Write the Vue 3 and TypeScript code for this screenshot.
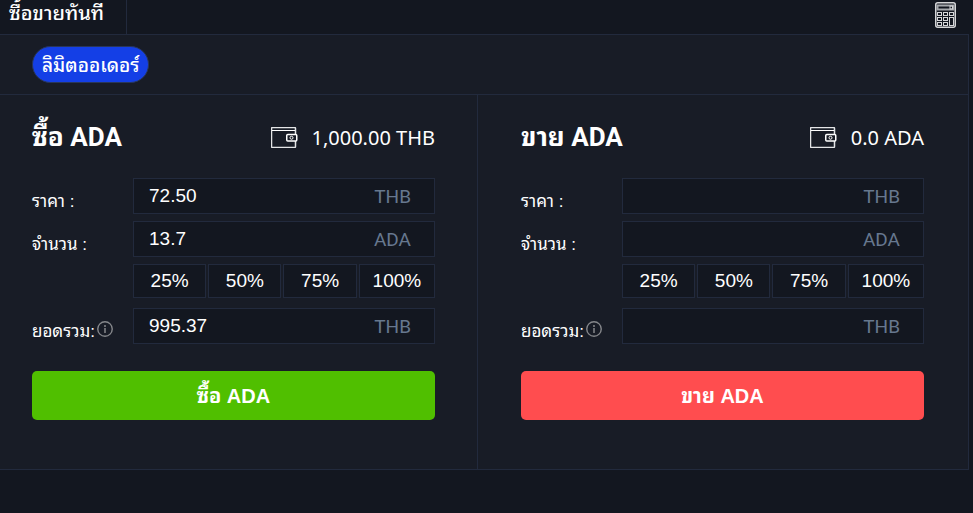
<script setup lang="ts">
import { reactive } from 'vue'

interface Side {
  id: string
  action: string
  balance: string
  price: string
  amount: string
  total: string
}

const sides = reactive<Side[]>([
  { id: 'buy', action: 'ซื้อ ADA', balance: '1,000.00 THB', price: '72.50', amount: '13.7', total: '995.37' },
  { id: 'sell', action: 'ขาย ADA', balance: '0.0 ADA', price: '', amount: '', total: '' },
])

const shares = [25, 50, 75, 100]

function useShare(side: Side, share: number) {
  const price = Number(side.price)
  const balance = parseFloat(side.balance.replace(/,/g, ''))
  if (!price) return
  const amount = side.id === 'buy' ? (balance * share) / 100 / price : (balance * share) / 100
  side.amount = amount.toFixed(2)
  side.total = (amount * price).toFixed(2)
}
</script>

<template>
  <main class="trade">
    <header class="topbar">
      <a class="tab" href="#instant">ซื้อขายทันที</a>
      <button class="calculator" type="button">
        <svg width="21" height="26" viewBox="0 0 21 26" fill="none" stroke="#d5d6d8">
          <rect x="0.75" y="0.75" width="19.5" height="24.5" rx="2" stroke-width="1.5" />
          <path d="M2.5 3.5h16v4h-16z" stroke="#a5a8ac" stroke-width="2" />
          <rect x="15" y="4" width="2.5" height="3" />
          <rect x="2.5" y="10.5" width="4" height="3" />
          <rect x="8.5" y="10.5" width="4" height="3" />
          <rect x="14.5" y="10.5" width="4" height="3" />
          <rect x="2.5" y="15.5" width="4" height="3" />
          <rect x="8.5" y="15.5" width="4" height="3" />
          <rect x="2.5" y="20.5" width="4" height="3" />
          <rect x="8.5" y="20.5" width="4" height="3" />
          <rect x="14.5" y="15.5" width="4" height="8" />
        </svg>
      </button>
    </header>

    <section class="panel">
      <nav class="modes">
        <button class="mode" type="button">ลิมิตออเดอร์</button>
      </nav>

      <div class="sides">
        <form v-for="side in sides" :key="side.id" class="side" :class="side.id" @submit.prevent>
          <div class="heading">
            <h2>{{ side.action }}</h2>
            <div class="balance">
              <svg width="27" height="21" viewBox="0 0 27 21" fill="none" stroke="#e4e5e7">
                <path d="M24.5 7V1.5q0-1-1-1h-22q-1 0-1 1v18q0 1 1 1h22q1 0 1-1V14" stroke-width="1.5" />
                <path d="M1 3.5h23" stroke="#fff" />
                <rect x="15.75" y="7.5" width="10" height="6.5" rx="1" stroke="#fff" stroke-width="1.5" />
                <circle cx="20.5" cy="10.75" r="1.5" stroke="#fff" />
              </svg>
              <span>{{ side.balance }}</span>
            </div>
          </div>

          <div class="row">
            <label :for="side.id + '-price'">ราคา :</label>
            <div class="field">
              <input :id="side.id + '-price'" v-model="side.price" type="text" inputmode="decimal" />
              <span class="unit">THB</span>
            </div>
          </div>
          <div class="row">
            <label :for="side.id + '-amount'">จำนวน :</label>
            <div class="field">
              <input :id="side.id + '-amount'" v-model="side.amount" type="text" inputmode="decimal" />
              <span class="unit">ADA</span>
            </div>
          </div>
          <div class="row shares-row">
            <div class="shares">
              <button v-for="share in shares" :key="share" type="button" @click="useShare(side, share)">{{ share }}%</button>
            </div>
          </div>
          <div class="row">
            <label :for="side.id + '-total'">
              ยอดรวม:<svg width="16" height="16" viewBox="0 0 16 16" fill="none" stroke="#85878b">
                <circle cx="8" cy="8" r="7.25" stroke-width="1.4" />
                <path d="M8 4v2M8 7v5" stroke-width="1.5" />
              </svg>
            </label>
            <div class="field">
              <input :id="side.id + '-total'" v-model="side.total" type="text" inputmode="decimal" />
              <span class="unit">THB</span>
            </div>
          </div>

          <button class="submit" type="submit">{{ side.action }}</button>
        </form>
      </div>
    </section>
  </main>
</template>

<style>
body {
  background: #131720;
}
</style>

<style scoped>
.trade {
  --line: #222a3d;
  --panel: #181c26;
  --deep: #131720;
  --thai: "Noto Sans Thai Looped", Loma, Garuda, "Noto Sans Thai";
  color: #fff;
  font-family: "Liberation Sans", var(--thai), sans-serif;
  font-size: 17px;
  min-height: 100vh;
  box-sizing: border-box;
  padding-right: 4px;
  background: var(--deep);
}

button,
input {
  font: inherit;
  color: inherit;
  padding: 0;
  border: 0;
  background: none;
}

button {
  cursor: pointer;
}

.topbar {
  display: flex;
  justify-content: space-between;
  height: 34px;
}

.tab {
  box-sizing: border-box;
  width: 127px;
  padding: 0 9px;
  border-right: 1px solid var(--line);
  color: #fff;
  font-size: 20px;
  font-weight: 500;
  line-height: 26px;
  text-decoration: none;
  white-space: nowrap;
}

.calculator {
  display: flex;
  padding: 2px 13px 0 0;
  align-items: flex-start;
}

.panel {
  border: 1px solid var(--line);
  border-left: 0;
  background: var(--panel);
}

.modes {
  display: flex;
  padding: 11px 32px;
  border-bottom: 1px solid var(--line);
}

.mode {
  height: 37px;
  padding: 0 9px 2px;
  border: 1px solid #29365a;
  border-radius: 19px;
  background: #143fe6;
  font-size: 19px;
  font-weight: 500;
  white-space: nowrap;
}

.sides {
  display: grid;
  grid-template-columns: minmax(0, 478fr) minmax(0, 490fr);
}

.side {
  padding: 20px 44px 49px 43px;
}

.side.buy {
  padding-right: 42px;
  padding-left: 32px;
  border-right: 1px solid var(--line);
}

.heading {
  display: flex;
  align-items: center;
  justify-content: space-between;
  height: 44px;
  margin-bottom: 19px;
}

h2 {
  margin: 0;
  font-family: Roboto, var(--thai), sans-serif;
  font-size: 26px;
  font-weight: 700;
  line-height: 44px;
  white-space: nowrap;
}

.balance {
  display: flex;
  align-items: center;
  gap: 14px;
  font-family: "Noto Sans", sans-serif;
  font-size: 20px;
  white-space: nowrap;
}

.row {
  display: flex;
  height: 36px;
  margin-bottom: 7px;
}

.row label {
  display: flex;
  align-items: center;
  gap: 2px;
  width: 101px;
  flex: none;
  box-sizing: border-box;
  padding-top: 6px;
  white-space: nowrap;
}

.field {
  display: flex;
  flex: 1;
  min-width: 0;
  box-sizing: border-box;
  align-items: center;
  padding: 0 23px 0 15px;
  border: 1px solid var(--line);
  background: var(--deep);
}

.field input {
  flex: 1;
  min-width: 0;
  height: 34px;
  font-size: 19px;
  outline: 0;
}

.unit {
  color: #67788f;
  font-family: Roboto, sans-serif;
  font-size: 19px;
}

.shares-row {
  height: 34px;
  margin-bottom: 10px;
  padding-left: 101px;
}

.shares {
  display: grid;
  flex: 1;
  grid-template-columns: 73fr 73fr 73fr 76fr;
  gap: 2px;
}

.shares button {
  border: 1px solid var(--line);
  background: var(--deep);
  font-size: 19px;
}

.submit {
  width: 100%;
  height: 49px;
  margin-top: 20px;
  padding-bottom: 4px;
  border-radius: 5px;
  font-size: 20px;
  font-weight: 700;
}

.buy .submit {
  background: #50bf00;
}

.sell .submit {
  background: #ff4d4f;
}
</style>
